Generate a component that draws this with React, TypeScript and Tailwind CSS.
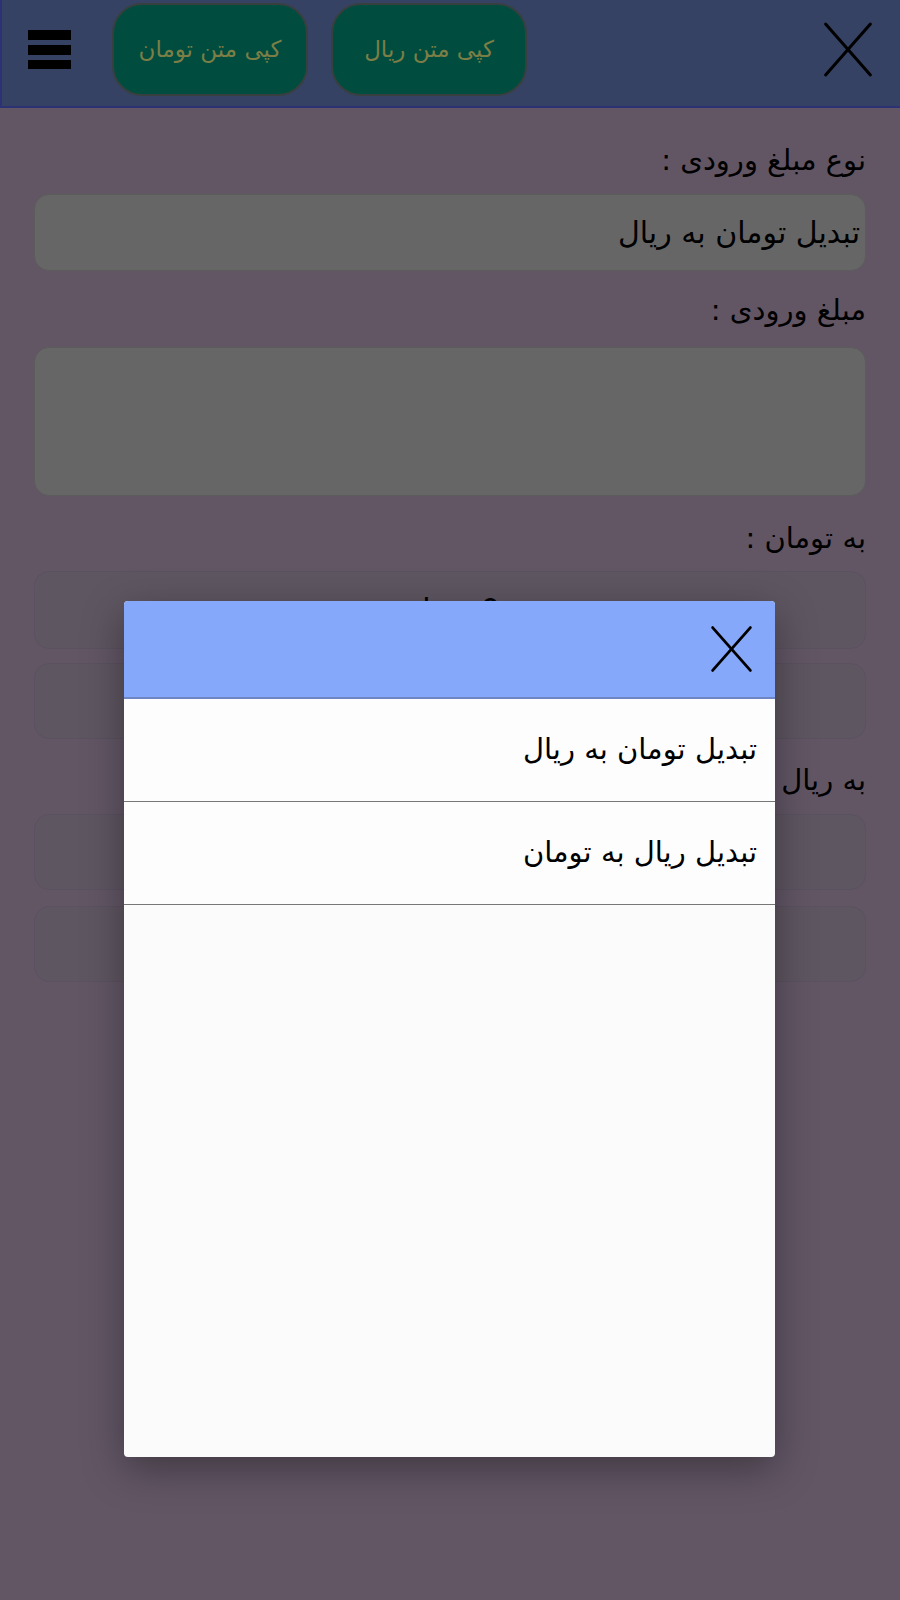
import * as React from 'react';

const fontStack = { fontFamily: '"DejaVu Sans", "Noto Sans", sans-serif' };

const CloseIcon: React.FC<{ className?: string; stroke?: number }> = ({ className, stroke = 3 }) => (
    <svg viewBox="0 0 50 56" className={className} fill="none" stroke="#000" strokeWidth={stroke} strokeLinecap="round">
        <path d="M3 3 L47 53" />
        <path d="M47 3 L3 53" />
    </svg>
);

const Field: React.FC<{ dim?: boolean; text?: string; center?: boolean; h?: string }> = ({ dim, text, center, h }) => (
    <div
        className={`${h} w-full rounded-[15px] border flex items-center px-[5px] ${dim ? 'bg-[#5e5661] border-[#5a5260]' : 'bg-[#666666] border-[#5c5c5c]'} ${center ? 'justify-center' : 'justify-start'}`}
    >
        {text && <span className="text-[30px] text-black leading-none">{text}</span>}
    </div>
);

const Label: React.FC<{ children: React.ReactNode; className?: string }> = ({ children, className }) => (
    <div className={`h-[40px] flex items-center text-[29px] text-black ${className}`}>{children}</div>
);

export default function App() {
    const options = ['تبدیل تومان به ریال', 'تبدیل ریال به تومان'];

    return (
        <div className="relative w-full min-h-[1600px] bg-[#625665] overflow-hidden" style={fontStack}>
            {/* top bar */}
            <div dir="ltr" className="h-[108px] pb-[8px] bg-[#354263] border-b-2 border-l-2 border-[#2c3274] flex items-center">
                <div className="ml-[26px] flex flex-col gap-[5px]">
                    <div className="w-[43px] h-[10px] bg-black" />
                    <div className="w-[43px] h-[10px] bg-black" />
                    <div className="w-[43px] h-[9px] bg-black" />
                </div>
                <button type="button" className="ml-[41px] w-[196px] h-[93px] rounded-[30px] bg-[#004d40] border-2 border-[#37403f] text-[23px] text-[#7c7e45]">
                    کپی متن تومان
                </button>
                <button type="button" className="ml-[23px] w-[196px] h-[93px] rounded-[30px] bg-[#004d40] border-2 border-[#37403f] text-[23px] text-[#7c7e45]">
                    کپی متن ریال
                </button>
                <CloseIcon className="ml-auto mr-[26px] w-[52px] h-[57px]" stroke={3} />
            </div>

            {/* form */}
            <div dir="rtl" className="px-[34px] flex flex-col">
                <Label className="mt-[33px] mb-[13px]">نوع مبلغ ورودی :</Label>
                <Field h="h-[77px]" text="تبدیل تومان به ریال" />
                <Label className="mt-[20px] mb-[16px]">مبلغ ورودی :</Label>
                <Field h="h-[149px]" />
                <Label className="mt-[23px] mb-[12px]">به تومان :</Label>
                <Field h="h-[78px]" dim center text="0 تومان" />
                <div className="h-[14px]" />
                <Field h="h-[76px]" dim />
                <Label className="mt-[22px] mb-[13px]">به ریال :</Label>
                <Field h="h-[76px]" dim center text="0 ریال" />
                <div className="h-[16px]" />
                <Field h="h-[76px]" dim />
            </div>

            {/* picker dialog */}
            <div dir="rtl" className="absolute left-[124px] top-[601px] w-[651px] h-[856px] rounded-[4px] bg-[#fbfbfb] shadow-[0_12px_40px_rgba(0,0,0,0.35)] overflow-hidden flex flex-col">
                <div className="h-[98px] shrink-0 bg-[#85a8fb] border-b-2 border-[#6f86c4] flex items-center pr-[22px]">
                    <CloseIcon className="w-[43px] h-[48px]" stroke={3.3} />
                </div>
                {options.map(opt => (
                    <div key={opt} className="h-[103px] shrink-0 border-b border-[#777777] bg-[#fdfdfd] flex items-center pr-[18px] text-[29px] text-black">
                        {opt}
                    </div>
                ))}
            </div>
        </div>
    );
}
